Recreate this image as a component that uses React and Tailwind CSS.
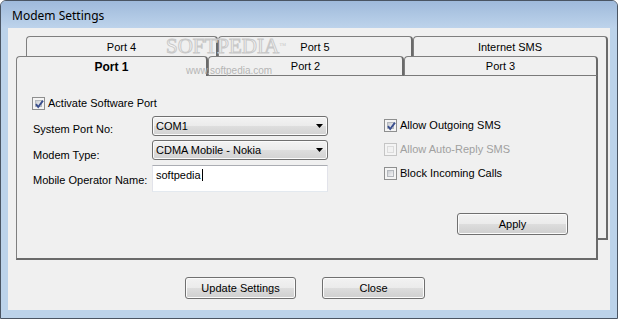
import React from "react";

const UI = "[font-family:'Liberation_Sans',Arial,sans-serif]";

function CheckBox({ checked, disabled }) {
  return (
    <div
      className={
        disabled
          ? "relative w-[13px] h-[13px] border border-[#c5c5c5] bg-[#f4f4f4] p-[2px] shrink-0"
          : "relative w-[13px] h-[13px] border border-[#8e8f8f] bg-[#f4f4f4] p-[2px] shrink-0"
      }
    >
      <div
        className={
          disabled
            ? "w-full h-full border border-[#dcdcdc] bg-[#f2f2f2]"
            : "w-full h-full border border-[#b4b8bd] bg-[linear-gradient(135deg,#c9ccd1,#f5f5f6)]"
        }
      />
      {checked && (
        <svg
          className="absolute left-[1px] top-[1px]"
          width="11"
          height="11"
          viewBox="0 0 11 11"
        >
          <path
            d="M2 5.2 L4.2 8 L9 1.6"
            fill="none"
            stroke="#3a4f8e"
            strokeWidth="1.9"
          />
        </svg>
      )}
    </div>
  );
}

function Combo({ value }) {
  return (
    <div className="h-[20px] w-[176px] rounded-[3px] border border-[#707070] bg-[linear-gradient(#f3f3f3,#ebebeb_50%,#dedede_50%,#d2d2d2)] shadow-[inset_0_0_0_1px_#fbfbfb] flex items-center justify-between pl-[3px] pr-[4px]">
      <span className="text-[11px] leading-[13px] text-black">{value}</span>
      <svg width="7" height="4" viewBox="0 0 7 4">
        <path d="M0 0 H7 L3.5 4 Z" fill="#000" />
      </svg>
    </div>
  );
}

function Button({ label, w }) {
  return (
    <div
      className={`${w} h-[22px] rounded-[3px] border border-[#707070] bg-[linear-gradient(#f2f2f2,#ebebeb_50%,#dddddd_50%,#cfcfcf)] shadow-[inset_0_0_0_1px_#fbfbfb] flex items-center justify-center text-[11px] leading-[13px] text-black`}
    >
      {label}
    </div>
  );
}

function Tab({ label, w, selected, bottom }) {
  return (
    <div
      className={`${w} h-[20px] shrink-0 rounded-t-[4px] border-t border-l border-r-2 border-t-[#7f7f7f] border-l-[#7f7f7f] border-r-[#6a6a6a] bg-[#f0f0f0] flex items-center justify-center ${
        bottom ? "border-b border-b-[#7a7a7a]" : ""
      } ${selected ? "font-bold text-[12px]" : "text-[11px]"} leading-[14px] text-black`}
    >
      {label}
    </div>
  );
}

export default function App() {
  return (
    <div
      className={`${UI} relative w-[618px] h-[319px] flex flex-col bg-[#bcd3ea] border border-[#4a5563] rounded-t-[6px] overflow-hidden`}
    >
      {/* Title bar */}
      <div className="h-[27px] shrink-0 flex items-center pl-[11px] pt-[3px] bg-[linear-gradient(#9fbadb,#bdd3eb)] [font-family:'Noto_Sans','Open_Sans',sans-serif] text-[12px] text-black">
        Modem Settings
      </div>

      {/* Client area */}
      <div className="flex-1 mx-[7px] mb-[8px] bg-[#f0f0f0] flex flex-col pt-[8px] pl-[8px]">
        {/* back tab row */}
        <div className="flex ml-[10px]">
          <Tab label="Port 4" w="w-[192px]" />
          <Tab label="Port 5" w="w-[195px]" />
          <Tab label="Internet SMS" w="w-[195px]" />
        </div>

        <div className="flex items-start">
          <div className="flex flex-col">
            {/* front tab row */}
            <div className="flex">
              <Tab label="Port 1" w="w-[192px]" selected />
              <Tab label="Port 2" w="w-[196px]" bottom />
              <Tab label="Port 3" w="w-[194px]" bottom />
            </div>

            {/* panel */}
            <div className="w-[582px] h-[184px] border-l border-l-[#7f7f7f] border-r-2 border-r-[#6a6a6a] border-b-2 border-b-[#6a6a6a] bg-[#f0f0f0] flex text-[11px] leading-[13px] text-black">
              {/* left column */}
              <div className="w-[311px] pl-[15px] pt-[21px] flex flex-col">
                <div className="flex items-center gap-[3px] h-[13px]">
                  <CheckBox checked />
                  <span>Activate Software Port</span>
                </div>
                <div className="mt-[6px] ml-[1px] grid grid-cols-[119px_176px] gap-y-[4px]">
                  <div className="pt-[7px]">System Port No:</div>
                  <Combo value="COM1" />
                  <div className="pt-[9px]">Modem Type:</div>
                  <Combo value="CDMA Mobile - Nokia" />
                  <div className="pt-[9px] -mt-[1px]">Mobile Operator Name:</div>
                  <div className="-mt-[1px] h-[27px] w-[176px] bg-white border border-[#e2e3ea] border-t-[#abadb3] border-b-[#e3e9ef] pl-[3px] pt-[3px] flex items-start">
                    <span>softpedia</span>
                    <span className="w-[1px] h-[12px] bg-black ml-[1px]" />
                  </div>
                </div>
              </div>

              {/* right column */}
              <div className="ml-[56px] pt-[37px] flex flex-col">
                <div className="h-[24px] flex items-center gap-[3px]">
                  <CheckBox checked />
                  <span>Allow Outgoing SMS</span>
                </div>
                <div className="h-[24px] flex items-center gap-[3px]">
                  <CheckBox disabled />
                  <span className="text-[#a0a0a0]">Allow Auto-Reply SMS</span>
                </div>
                <div className="h-[24px] flex items-center gap-[3px]">
                  <CheckBox />
                  <span>Block Incoming Calls</span>
                </div>
                <div className="mt-[28px] ml-[73px]">
                  <Button label="Apply" w="w-[111px]" />
                </div>
              </div>
            </div>
          </div>

          {/* back panel edge */}
          <div className="w-[10px] h-[184px] border-r-2 border-r-[#6a6a6a] border-b-2 border-b-[#6a6a6a]" />
        </div>

        {/* bottom buttons */}
        <div className="mt-[17px] ml-[169px] flex gap-[26px]">
          <Button label="Update Settings" w="w-[111px]" />
          <Button label="Close" w="w-[103px]" />
        </div>
      </div>

      {/* watermark */}
      <div className="absolute left-[165px] top-[35px] pointer-events-none [font-family:'Liberation_Serif',serif] text-[21px] leading-[21px] text-[#f7f7f7] [-webkit-text-stroke:1px_#c8c8c8]">
        SOFTPEDIA
        <span className="text-[7px] align-top [-webkit-text-stroke:0] text-[#c8c8c8]">™</span>
      </div>
      <div className="absolute left-[185px] top-[64px] pointer-events-none text-[10px] leading-[11px] text-[#b5b5b5]">
        www.softpedia.com
      </div>
    </div>
  );
}
